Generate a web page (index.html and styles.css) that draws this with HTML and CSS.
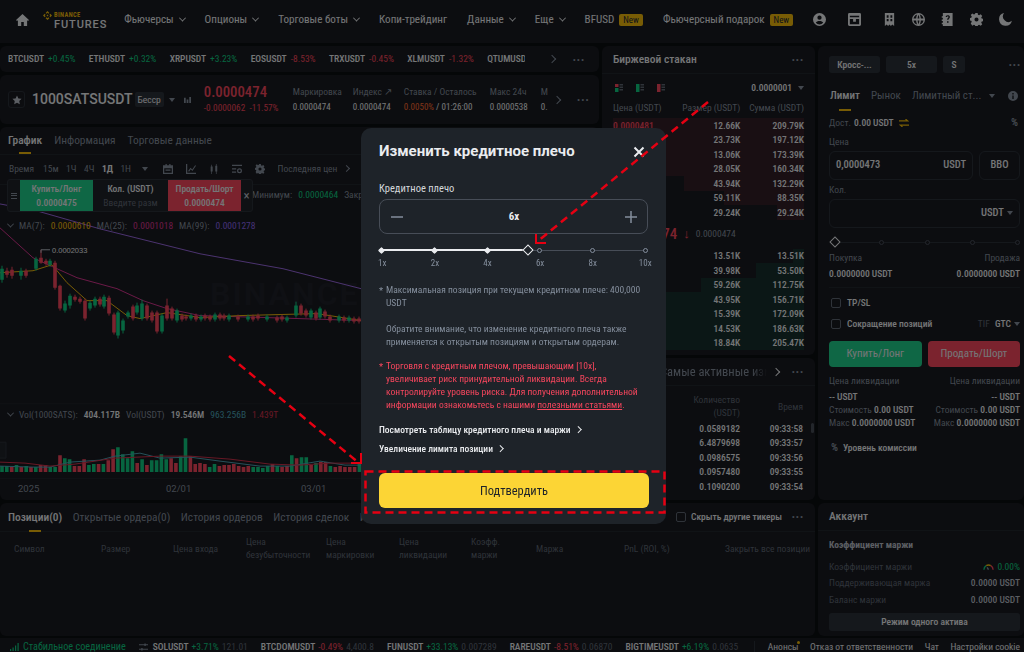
FILE: index.html
```html
<!DOCTYPE html>
<html lang="ru">
<head>
<meta charset="utf-8">
<title>Binance Futures</title>
<link rel="stylesheet" href="styles.css">
</head>
<body>
<div class="app">
  <header class="topbar">
    <svg class="home" viewBox="0 0 14 13"><path d="M7 0 0 6.500 1 7.600l1-.9V13h3.600V8.600h2.800V13H12V6.700l1 .9 1-1.100z"/></svg>
    <div class="logo">
      <svg class="logo-mark" viewBox="0 0 12 12"><path d="M6 0 8.500 2.500 7.300 3.700 6 2.400 4.700 3.700 3.500 2.500zM2.300 3.700 3.500 4.900 2.400 6 3.500 7.100 2.300 8.300 0 6zM9.700 3.700 12 6 9.700 8.300 8.500 7.100 9.600 6 8.500 4.900zM6 4.700 7.300 6 6 7.300 4.700 6zM3.500 9.500 4.700 8.300 6 9.600 7.300 8.300 8.500 9.500 6 12z"/></svg>
      <div class="logo-text"><span class="logo-top">BINANCE</span><span class="logo-bottom">FUTURES</span></div>
    </div>
    <nav class="nav">
      <a class="nav-item">Фьючерсы<i class="chev"></i></a>
      <a class="nav-item">Опционы<i class="chev"></i></a>
      <a class="nav-item">Торговые боты<i class="chev"></i></a>
      <a class="nav-item">Копи-трейдинг</a>
      <a class="nav-item">Данные<i class="chev"></i></a>
      <a class="nav-item">Еще<i class="chev"></i></a>
      <a class="nav-item">BFUSD<b class="new">New</b></a>
      <a class="nav-item">Фьючерсный подарок<b class="new">New</b></a>
    </nav>
    <div class="top-icons">
      <svg viewBox="0 0 14 14"><path fill-rule="evenodd" d="M7 0a7 7 0 1 0 0 14A7 7 0 0 0 7 0zm0 2.800a2.300 2.300 0 1 1 0 4.600 2.300 2.300 0 0 1 0-4.600zM3 10.600c.6-1.400 2.200-2.100 4-2.100s3.400.7 4 2.100a5.400 5.400 0 0 1-8 0z"/></svg>
      <svg viewBox="0 0 14 14"><path fill-rule="evenodd" d="M1.500 0h11A1.500 1.500 0 0 1 14 1.500v11a1.500 1.500 0 0 1-1.500 1.500h-11A1.500 1.500 0 0 1 0 12.500v-11A1.500 1.500 0 0 1 1.500 0zM2 3v1.500h10V3zm0 3.500V12h10V6.500H8.500v3h-3v-3z"/></svg>
      <svg viewBox="0 0 14 14"><path fill-rule="evenodd" d="M2 0h10v14l-2-1.500L8.500 14 7 12.500 5.500 14 4 12.500 2 14zm2 2.500V5h2V2.500zm4 0V5h2V2.500zM4 6.500V9h2V6.500zm4 0V9h2V6.500z"/></svg>
      <svg viewBox="0 0 14 14"><path fill-rule="evenodd" d="M7 0a7 7 0 1 0 0 14A7 7 0 0 0 7 0zM5.700 1.500C5 2.700 4.600 4.100 4.500 6H1.600a5.500 5.500 0 0 1 4.100-4.500zm2.600 0A5.500 5.500 0 0 1 12.400 6H9.500c-.1-1.900-.5-3.300-1.200-4.500zM7 1.800C7.500 3 7.900 4.300 8 6H6c.1-1.700.5-3 1-4.200zM1.600 8h2.900c.1 1.900.5 3.300 1.200 4.500A5.500 5.500 0 0 1 1.600 8zM6 8h2c-.1 1.700-.5 3-1 4.200C6.500 11 6.100 9.700 6 8zm3.500 0h2.900a5.500 5.500 0 0 1-4.100 4.500c.7-1.200 1.100-2.600 1.200-4.500z"/></svg>
      <svg viewBox="0 0 14 14"><path fill-rule="evenodd" d="M2 0h10.500v14H2v-2H.8v-1.500H2v-2H.8V7H2V5H.8V3.500H2zm5.300 2.300C5.900 2.300 5 3.100 5 4.400h1.500c0-.5.300-.8.800-.8s.8.300.8.700c0 .9-1.500 1-1.500 2.900h1.500c0-1.300 1.500-1.500 1.500-3 0-1.200-1-1.900-2.300-1.900zM6.500 9v1.600h1.600V9z"/></svg>
      <svg viewBox="0 0 14 14"><path fill-rule="evenodd" d="M5.800 0h2.400l.4 2 1.200.5 1.700-1.100 1.700 1.700-1.100 1.700.5 1.200 2 .4v2.400l-2 .4-.5 1.200 1.100 1.700-1.700 1.700-1.700-1.100-1.200.5-.4 2H5.800l-.4-2-1.200-.5-1.700 1.100L.8 11.200l1.100-1.700-.5-1.200-2-.4V5.500l2-.4.5-1.200L.8 2.200 2.500.5l1.700 1.100 1.200-.5zM7 4.800a2.200 2.200 0 1 0 0 4.400 2.200 2.200 0 0 0 0-4.400z"/></svg>
      <svg viewBox="0 0 14 14"><path d="M5.500 0a6 6 0 0 0 8.400 8.400A7 7 0 1 1 5.500 0z"/></svg>
    </div>
  </header>

  <main class="board">
    <section class="panel ticker">
      <div class="ticker-list">
        <span class="tick"><b>BTCUSDT</b><em class="up">+0.45%</em></span>
        <span class="tick"><b>ETHUSDT</b><em class="up">+0.32%</em></span>
        <span class="tick"><b>XRPUSDT</b><em class="up">+3.23%</em></span>
        <span class="tick"><b>EOSUSDT</b><em class="down">-8.53%</em></span>
        <span class="tick"><b>TRXUSDT</b><em class="down">-0.45%</em></span>
        <span class="tick"><b>XLMUSDT</b><em class="down">-1.32%</em></span>
        <span class="tick"><b>QTUMUSDT</b><em class="up">-1.23%</em></span>
      </div>
      <i class="chev-right"></i>
      <span class="dots">···</span>
    </section>

    <section class="panel symbol">
      <span class="star-box"><svg viewBox="0 0 12 12"><path d="m6 .6 1.700 3.500 3.800.5-2.800 2.700.7 3.800L6 9.300l-3.400 1.800.7-3.800L.5 4.600l3.800-.5z"/></svg></span>
      <strong class="sym-name">1000SATSUSDT</strong>
      <span class="sym-tag">Бесср</span>
      <i class="caret"></i>
      <svg class="sym-bars" viewBox="0 0 8 8"><path d="M0 2h2v6H0zM3 4h2v4H3zM6 1h2v7H6z"/></svg>
      <div class="sym-price">
        <span class="price-big">0.0000474</span>
        <span class="price-sub">-0.0000062 &nbsp;-11.57%</span>
      </div>
      <div class="sym-stat s1"><span>Маркировка</span><b>0.0000474</b></div>
      <div class="sym-stat s2"><span>Индекс ↗</span><b>0.0000474</b></div>
      <div class="sym-stat s3"><span>Ставка / Осталось</span><b><em class="orange">0.0050%</em> / 01:26:00</b></div>
      <div class="sym-stat s4"><span>Макс 24ч</span><b>0.0000538</b></div>
      <div class="sym-stat s5"><span>М</span><b>0.</b></div>
      <i class="chev-right"></i>
      <span class="dots">···</span>
    </section>

    <section class="panel chart">
      <div class="tabs chart-tabs">
        <span class="tab active">График</span>
        <span class="tab">Информация</span>
        <span class="tab">Торговые данные</span>
      </div>
      <div class="toolbar">
        <span class="tool t-time">Время</span>
        <span class="tool">15м</span>
        <span class="tool">1Ч</span>
        <span class="tool">4Ч</span>
        <span class="tool on">1Д</span>
        <span class="tool">1Н</span>
        <i class="caret tool-caret"></i>
        <svg class="tool-ic" viewBox="0 0 12 12"><path fill-rule="evenodd" d="M3 0h1.500v1.500h3V0H9v1.500h3V12H0V1.500h3zM1.500 5v5.500h9V5z"/><path d="M3 6.500h6V8H3z"/></svg>
        <svg class="tool-ic" viewBox="0 0 12 12"><path d="M0 0h1.500v10.500H12V12H0z"/><path d="m2.500 8.500 3-4 2 2 3.500-5 1 .7-4.300 6.200-2-2-2 2.900z"/></svg>
        <svg class="tool-ic" viewBox="0 0 12 12"><path d="M2 3h2.400v6H2zM2.800 1h.8v11h-.8zM7.500 2h2.400v7H7.500zM8.300 0h.8v12h-.8z"/></svg>
        <svg class="tool-ic" viewBox="0 0 12 12"><path fill-rule="evenodd" d="M0 1h12v1.500H0zM0 5h5v1.500H0zM0 9h5v1.500H0zM9 5a3 3 0 1 1 0 6 3 3 0 0 1 0-6zm0 1.500a1.500 1.500 0 1 0 0 3 1.500 1.500 0 0 0 0-3z"/></svg>
        <svg class="tool-ic" viewBox="0 0 14 14"><path fill-rule="evenodd" d="M5.800 0h2.400l.4 2 1.200.5 1.700-1.100 1.700 1.700-1.100 1.700.5 1.200 2 .4v2.400l-2 .4-.5 1.200 1.100 1.700-1.700 1.700-1.700-1.100-1.200.5-.4 2H5.800l-.4-2-1.200-.5-1.700 1.100L.8 11.200l1.100-1.700-.5-1.200-2-.4V5.500l2-.4.5-1.200L.8 2.200 2.500.5l1.700 1.100 1.200-.5zM7 4.800a2.200 2.200 0 1 0 0 4.400 2.200 2.200 0 0 0 0-4.400z"/></svg>
        <span class="tool t-last">Последняя цен</span>
        <i class="chev-right tool-arrow"></i>
      </div>
      <div class="canvas">
        <svg class="plot" viewBox="0 184 599 316" preserveAspectRatio="none">
          <path class="grid-line" d="M0 403.500H599M0 478.500H599"/>
          <text class="wm" x="210" y="304">BINANCE</text>
          <path class="wm-mark" transform="translate(177 292) scale(1.300) translate(-183 291)" d="M183 277l7 7-3 3-4-4-4 4-3-3zM172 288l3 3-3 3-3-3zM194 288l3 3-3 3-3-3zM183 288l3 3-3 3-3-3zM175 297l3-3 5 5 5-5 3 3-8 8z"/>
          <path class="ma99" d="M0 203 37 210 100 228 200 253 283 268 361 288 420 296"/>
          <path class="ma25" d="M0 227 33 257 57 268 77 277 117 288 143 300 167 308 200 315 267 317 361 320"/>
          <path class="ma7" d="M0 272 33 270 52 264 67 282 87 300 107 300 127 315 140 318 167 312 200 317 240 315 317 313 361 320"/>
          <path class="wick-g" d="M2 265V282M21 267V279M36 256V270M50 258V266M65 300V312M70 293V308M90 300V310M95 296V307M104 294V308M118 310V338M123 318V333M128 310V318M137 302V314M142 299V320M162 313V333M177 308V322M191 313V320M201 314V321M215 312V321M229 313V321M248 314V321M267 314V321M287 315V322M296 301V317M311 308V319M320 306V319M339 314V322M349 315V322"/>
          <path class="wick-r" d="M7 267V277M12 266V278M26 268V277M41 249V263M46 258V265M55 260V289M60 284V310M75 294V301M80 296V303M85 298V320M100 296V306M109 295V315M114 312V334M133 304V320M147 303V320M152 310V322M157 310V333M167 298V320M172 306V320M182 313V321M186 314V320M196 313V321M205 313V320M210 314V321M220 312V320M224 313V320M238 314V321M253 314V321M258 313V320M277 315V322M282 314V321M301 303V315M306 308V317M316 310V320M325 309V318M330 314V322M344 315V322M354 316V323M359 316V323"/>
          <path class="body-g" d="M2 268V279M21 270V275M36 258V268M50 260V264M65 303V310M70 295V305M90 302V308M95 298V305M104 296V306M118 312V335M123 320V330M128 312V316M137 305V312M142 303V318M162 315V331M177 310V320M191 315V318M201 316V319M215 314V319M229 315V319M248 316V319M267 316V319M287 317V320M296 305V315M311 310V317M320 308V317M339 316V320M349 317V320"/>
          <path class="body-r" d="M7 270V274M12 269V275M26 270V275M41 257V262M46 260V263M55 262V287M60 285V308M75 296V299M80 298V301M85 300V318M100 298V304M109 297V313M114 314V332M133 306V318M147 305V318M152 312V320M157 312V331M167 305V318M172 308V318M182 315V319M186 316V318M196 315V319M205 315V318M210 316V319M220 314V318M224 315V318M238 316V319M253 316V319M258 315V318M277 317V320M282 316V319M301 305V313M306 310V315M316 312V318M325 311V316M330 316V320M344 317V320M354 318V321M359 318V321"/>
          <path class="body-g" d="M2 472v-6M6.800 472v-6M16.500 472v-7M26.200 472v-6M35.800 472v-5M50.300 472v-5M55.100 472v-5M64.800 472v-14M69.600 472v-13M88.900 472v-7M93.800 472v-8M103.400 472v-8M117.900 472v-25M122.800 472v-18M127.600 472v-14M132.400 472v-21M142.100 472v-13M151.700 472v-12M156.600 472v-12M161.400 472v-18M166.200 472v-13M180.700 472v-16M185.500 472v-34M209.700 472v-5M214.500 472v-8M253.200 472v-5M258 472v-5M262.800 472v-4M267.700 472v-6M277.300 472v-6M291.800 472v-17M301.500 472v-15M306.300 472v-15M316 472v-9M330.400 472v-6M359.400 472v-8"/>
          <path class="body-r" d="M11.700 472v-5M21.300 472v-5M31 472v-5M40.600 472v-7M45.500 472v-7M60 472v-17M74.500 472v-6M79.300 472v-6M84.100 472v-13M98.600 472v-8M108.300 472v-12M113.100 472v-23M137.200 472v-9M146.900 472v-7M171.100 472v-14M175.900 472v-9M190.400 472v-16M195.200 472v-8M200 472v-9M204.900 472v-8M219.400 472v-6M224.200 472v-7M229 472v-7M233.800 472v-8M238.700 472v-6M243.500 472v-5M248.300 472v-6M272.500 472v-8M282.100 472v-5M287 472v-6M296.600 472v-14M311.100 472v-7M320.800 472v-10M325.600 472v-10M335.300 472v-5M340.100 472v-6M344.900 472v-5M349.800 472v-5M354.600 472v-5"/>
          <path class="vol-ma1" d="M0 466 33 467 50 467 70 462 100 460 115 456 140 453 160 458 190 457 220 461 260 466 290 466 320 461 345 465 361 465"/>
          <path class="vol-ma2" d="M0 462 25 463 50 466 75 464 115 458 160 456 190 456 230 459 270 464 300 465 330 463 361 463"/>
          <path class="wm-tab" d="M0 442H6V458H0"/>
          <path class="price-tick" d="M41 249V252M41 249H50"/>
          <text class="price-label" x="52" y="252">0.0002033</text>
          <g class="axis">
            <text x="18" y="492">2025</text>
            <text x="166" y="492">02/01</text>
            <text x="301" y="492">03/01</text>
          </g>
        </svg>
        <div class="ohlc"><span>Минимум:</span><em class="up">0.0000464</em><span>Закрыть:</span></div>
        <div class="trade-widget">
          <span class="tw-grip"><i></i><i></i><i></i></span>
          <button class="tw-btn buy"><b>Купить/Лонг</b><b>0.0000475</b></button>
          <span class="tw-mid"><b>Кол. (USDT)</b><span>Введите разм</span></span>
          <button class="tw-btn sell"><b>Продать/Шорт</b><b>0.0000474</b></button>
          <span class="tw-close">×</span>
        </div>
        <div class="legend ma-legend">
          <i class="chev small"></i><span>MA(7):</span><em class="c-yellow">0.0000610</em><span>MA(25):</span><em class="c-pink">0.0001018</em><span>MA(99):</span><em class="c-violet">0.0001278</em>
        </div>
        <div class="legend vol-legend">
          <i class="chev small"></i><span>Vol(1000SATS):</span><b>404.117B</b><span>Vol(USDT)</span><b>19.546M</b><em class="c-teal">963.256B</em><em class="c-maroon">1.439T</em>
        </div>
      </div>
    </section>

    <section class="panel book">
      <div class="panel-head"><span class="panel-title">Биржевой стакан</span><span class="dots">···</span></div>
      <div class="book-tools">
        <svg viewBox="0 0 8 8"><path class="f-r" d="M0 0h3.500v3H0z"/><path class="f-g" d="M0 4h3.500v4H0z"/><path class="f-gray" d="M4.500 0H8v1.500H4.500zM4.500 2.500H8V4H4.500zM4.500 5H8v1.500H4.500z"/></svg>
        <svg viewBox="0 0 8 8"><path class="f-g" d="M0 0h3.500v8H0z"/><path class="f-gray" d="M4.500 0H8v1.500H4.500zM4.500 2.500H8V4H4.500zM4.500 5H8v1.500H4.500z"/></svg>
        <svg viewBox="0 0 8 8"><path class="f-r" d="M0 0h3.500v8H0z"/><path class="f-gray" d="M4.500 0H8v1.500H4.500zM4.500 2.500H8V4H4.500zM4.500 5H8v1.500H4.500z"/></svg>
        <span class="tick-size">0.0000001</span><i class="caret"></i>
      </div>
      <div class="book-head"><span>Цена (USDT)</span><span>Размер (USDT)</span><span>Сумма (USDT)</span></div>
      <div class="book-rows">
        <div class="ob ask"><i style="width:100%"></i><span>0.0000481</span><span>12.66K</span><span>209.79K</span></div>
        <div class="ob ask"><i style="width:94%"></i><span>0.0000480</span><span>23.73K</span><span>197.12K</span></div>
        <div class="ob ask"><i style="width:83%"></i><span>0.0000479</span><span>13.06K</span><span>173.39K</span></div>
        <div class="ob ask"><i style="width:76%"></i><span>0.0000478</span><span>28.05K</span><span>160.34K</span></div>
        <div class="ob ask"><i style="width:63%"></i><span>0.0000477</span><span>43.94K</span><span>132.29K</span></div>
        <div class="ob ask"><i style="width:42%"></i><span>0.0000476</span><span>59.11K</span><span>88.35K</span></div>
        <div class="ob ask"><i style="width:14%"></i><span>0.0000475</span><span>29.24K</span><span>29.24K</span></div>
      </div>
      <div class="book-mid"><span class="mid-price">0.0000474</span><span class="mid-arrow">↓</span><span class="mid-mark">0.0000474</span></div>
      <div class="book-rows">
        <div class="ob bid"><i style="width:6%"></i><span>0.0000474</span><span>13.51K</span><span>13.51K</span></div>
        <div class="ob bid"><i style="width:25%"></i><span>0.0000473</span><span>39.98K</span><span>53.50K</span></div>
        <div class="ob bid"><i style="width:54%"></i><span>0.0000472</span><span>59.26K</span><span>112.75K</span></div>
        <div class="ob bid"><i style="width:75%"></i><span>0.0000471</span><span>43.95K</span><span>156.71K</span></div>
        <div class="ob bid"><i style="width:82%"></i><span>0.0000470</span><span>15.39K</span><span>172.09K</span></div>
        <div class="ob bid"><i style="width:89%"></i><span>0.0000469</span><span>14.53K</span><span>186.63K</span></div>
        <div class="ob bid"><i style="width:98%"></i><span>0.0000468</span><span>18.84K</span><span>205.47K</span></div>
      </div>
    </section>

    <section class="panel trades">
      <div class="panel-head trades-head"><span class="panel-title fade">Сделки &nbsp; Самые активные изменения</span><i class="chev-right"></i><span class="dots">···</span></div>
      <div class="trades-cols"><span>Цена (USDT)</span><span>Количество<br>(USDT)</span><span>Время</span></div>
      <div class="tr"><span class="down">0.0000474</span><span>0.0589182</span><span>09:33:58</span></div>
      <div class="tr"><span class="up">0.0000475</span><span>6.4879698</span><span>09:33:57</span></div>
      <div class="tr"><span class="up">0.0000475</span><span>0.0986575</span><span>09:33:56</span></div>
      <div class="tr"><span class="down">0.0000474</span><span>0.0957480</span><span>09:33:55</span></div>
      <div class="tr"><span class="down">0.0000474</span><span>0.1090200</span><span>09:33:54</span></div>
      <i class="scrollthumb"></i>
    </section>

    <aside class="panel order">
      <div class="pills">
        <span class="pill">Кросс-...</span><span class="pill">5x</span><span class="pill narrow">S</span><span class="dots">···</span>
      </div>
      <div class="order-tabs">
        <span class="tab active">Лимит</span><span class="tab">Рынок</span><span class="tab">Лимитный ст...</span><i class="caret"></i>
        <svg class="info" viewBox="0 0 10 10"><path fill-rule="evenodd" d="M5 0a5 5 0 1 0 0 10A5 5 0 0 0 5 0zM4.300 2h1.400v1.400H4.300zm0 2.400h1.400V8H4.300z"/></svg>
      </div>
      <div class="avail"><span class="muted">Дост.</span><b>0.00 USDT</b>
        <svg class="swap" viewBox="0 0 10 8"><path d="M0 1.800h8.500L6.500 0M10 6.200H1.500L3.500 8" fill="none" stroke="currentColor" stroke-width="1.200"/></svg>
        <span class="pct">%</span></div>
      <label class="f-label">Цена</label>
      <div class="field-row">
        <div class="field"><b>0,0000473</b><b>USDT</b></div>
        <div class="field bbo">BBO</div>
      </div>
      <label class="f-label second">Кол.</label>
      <div class="field full"><span></span><b>USDT <i class="caret"></i></b></div>
      <div class="o-slider">
        <i class="o-line"></i>
        <i class="o-diamond"></i><i class="o-dot"></i><i class="o-dot"></i><i class="o-dot"></i><i class="o-dot"></i>
      </div>
      <div class="two muted"><span>Покупка</span><span>Продажа</span></div>
      <div class="two strong"><span>0.0000000 USDT</span><span>0.0000000 USDT</span></div>
      <hr class="rule">
      <div class="check-row"><i class="box"></i><span>TP/SL</span></div>
      <div class="check-row"><i class="box"></i><span>Сокращение позиций</span><span class="tif"><em>TIF</em> GTC <i class="caret"></i></span></div>
      <div class="actions"><button class="act buy">Купить/Лонг</button><button class="act sell">Продать/Шорт</button></div>
      <div class="two muted liq"><span>Цена ликвидации</span><span>Цена ликвидации</span></div>
      <div class="two strong"><span>-- USDT</span><span>-- USDT</span></div>
      <div class="two strong"><span><em>Стоимость</em> 0.00 USDT</span><span><em>Стоимость</em> 0.00 USDT</span></div>
      <div class="two strong"><span><em>Макс</em> 0.0000000 USDT</span><span><em>Макс</em> 0.0000000 USDT</span></div>
      <div class="fee"><span class="pct">%</span><span>Уровень комиссии</span></div>
    </aside>

    <section class="panel positions">
      <div class="tabs pos-tabs">
        <span class="tab active">Позиции(0)</span>
        <span class="tab">Открытые ордера(0)</span>
        <span class="tab">История ордеров</span>
        <span class="tab">История сделок</span>
        <span class="tab">История транзакций</span>
        <span class="pos-right"><i class="box"></i><span>Скрыть другие тикеры</span><span class="dots">···</span></span>
      </div>
      <div class="pos-cols">
        <span>Символ</span><span>Размер</span><span>Цена входа</span><span>Цена<br>безубыточности</span><span>Цена<br>маркировки</span><span>Цена<br>ликвидации</span><span>Коэфф.<br>маржи</span><span>Маржа</span><span>PnL (ROI, %)</span><span>Закрыть все позиции</span>
      </div>
    </section>

    <aside class="panel account">
      <div class="panel-head"><span class="panel-title">Аккаунт</span></div>
      <div class="acc-body">
        <div class="acc-sub">Коэффициент маржи</div>
        <div class="acc-row"><span>Коэффициент маржи</span><span class="gauge-wrap"><svg class="gauge" viewBox="0 0 12 9"><path d="M1 8A5 5 0 0 1 3.500 3.600" stroke="#0ecb81"/><path d="M3.500 3.600A5 5 0 0 1 8.500 3.600" stroke="#f0b90b"/><path d="M8.500 3.600A5 5 0 0 1 11 8" stroke="#f6465d"/><path d="M6 8 4.500 5.500" stroke="#848e9c"/></svg><em class="up">0.00%</em></span></div>
        <div class="acc-row"><span>Поддерживающая маржа</span><b>0.0000 USDT</b></div>
        <div class="acc-row"><span>Баланс маржи</span><b>0.0000 USDT</b></div>
        <div class="acc-btn">Режим одного актива</div>
      </div>
    </aside>
  </main>

  <footer class="status">
    <svg class="signal" viewBox="0 0 9 8"><path d="M0 6h1.200v2H0zM2.500 4.500h1.200V8H2.500zM5 2.500h1.200V8H5zM7.500 0h1.200v8H7.500z"/></svg>
    <span class="up conn">Стабильное соединение</span>
    <svg class="sliders" viewBox="0 0 10 8"><path d="M0 1h10v1H0zM0 6h10v1H0zM6 0h1.500v3H6zM2.500 5H4v3H2.500z"/></svg>
    <div class="stat-list">
      <span class="tick"><b>SOLUSDT</b><em class="up">+3.71%</em><u>121.01</u></span>
      <span class="tick"><b>BTCDOMUSDT</b><em class="down">-0.49%</em><u>4,400.8</u></span>
      <span class="tick"><b>FUNUSDT</b><em class="up">+33.13%</em><u>0.007289</u></span>
      <span class="tick"><b>RAREUSDT</b><em class="down">-8.51%</em><u>0.06870</u></span>
      <span class="tick"><b>BIGTIMEUSDT</b><em class="up">+6.19%</em><u>0.0635</u></span>
    </div>
    <div class="foot-links">
      <a class="notice">Анонсы</a><a>Отказ от ответственности</a><a>Чат</a><a>Настройки cookie</a>
    </div>
  </footer>
</div>

<div class="backdrop">
  <div class="modal">
    <div class="modal-head"><h2>Изменить кредитное плечо</h2>
      <svg class="close" viewBox="0 0 12 12"><path d="M1.500 1.500l9 9M10.500 1.500l-9 9"/></svg>
    </div>
    <div class="m-label">Кредитное плечо</div>
    <div class="stepper">
      <svg viewBox="0 0 12 12"><path d="M0 6h12"/></svg>
      <b>6x</b>
      <svg viewBox="0 0 12 12"><path d="M0 6h12M6 0v12"/></svg>
    </div>
    <div class="slider">
      <i class="s-track"></i><i class="s-fill"></i>
      <i class="s-mark on"></i><i class="s-mark on"></i><i class="s-mark on"></i><i class="s-mark"></i><i class="s-mark"></i><i class="s-mark"></i>
      <i class="s-thumb"></i>
    </div>
    <div class="s-labels"><span>1x</span><span>2x</span><span>4x</span><span>6x</span><span>8x</span><span>10x</span></div>
    <p class="note star">Максимальная позиция при текущем кредитном плече: 400,000 USDT</p>
    <p class="note">Обратите внимание, что изменение кредитного плеча также применяется к открытым позициям и открытым ордерам.</p>
    <p class="note star warn">Торговля с кредитным плечом, превышающим [10x], увеличивает риск принудительной ликвидации. Всегда контролируйте уровень риска. Для получения дополнительной информации ознакомьтесь с нашими <u>полезными статьями</u>.</p>
    <a class="m-link">Посмотреть таблицу кредитного плеча и маржи<i class="chev-right"></i></a>
    <a class="m-link">Увеличение лимита позиции<i class="chev-right"></i></a>
    <button class="confirm">Подтвердить</button>
  </div>
</div>

<svg class="marks" viewBox="0 0 1024 652">
  <path class="dash" d="M229 356 359 463"/>
  <path class="arrow" d="M351 463H361V453"/>
  <path class="dash" d="M708 102 538 241"/>
  <path class="arrow" d="M536 234 536 243 546 243"/>
  <rect class="dash" x="365.500" y="471.500" width="299" height="41"/>
</svg>
</body>
</html>
```
FILE: styles.css
```css
*{box-sizing:border-box}
html,body{margin:0;height:100%;overflow:hidden}
body{background:#0b0e11;color:#eaecef;font:11px/1.2 Roboto,"Noto Sans",sans-serif;font-stretch:85%}
em{font-style:normal}
i{display:inline-block}
a{color:inherit}
button{font:inherit;font-stretch:inherit;border:0;padding:0;color:inherit}
p,h2{margin:0}

.app{width:1024px;height:652px;display:flex;flex-direction:column}
.up{color:#0ecb81}
.down{color:#f6465d}
.orange{color:#fc6a31}
.c-yellow{color:#f0b90b}
.c-pink{color:#d6348f}
.c-violet{color:#8a63e6}
.c-teal{color:#4ba3b5}
.c-maroon{color:#d0304a}

.chev{width:5px;height:5px;border:solid currentColor;border-width:0 1.2px 1.2px 0;transform:rotate(45deg) translate(-1px,-1px);margin-left:6px;flex:none}
.chev.small{margin:0 0 0 4px;color:#848e9c}
.chev-right{width:6px;height:6px;border:solid currentColor;border-width:1.400px 1.400px 0 0;transform:rotate(45deg);flex:none}
.caret{width:0;height:0;border:3.500px solid transparent;border-top:4px solid #848e9c;border-bottom:0;flex:none}
.dots{color:#848e9c;font-size:13px;font-weight:700;letter-spacing:.5px;line-height:1;flex:none}

.topbar{height:43px;flex:none;background:#181a20;display:flex;align-items:center;padding:0 0 4px 16px}
.home{width:13px;height:12px;fill:#eaecef;flex:none}
.logo{display:flex;margin-left:14px;gap:2px;flex:none}
.logo-mark{width:9px;height:9px;fill:#f0b90b;margin-top:1px}
.logo-text{display:flex;flex-direction:column;line-height:1}
.logo-top{font-size:6.500px;font-weight:700;color:#f0b90b;letter-spacing:.35px;margin-top:2px}
.logo-bottom{font-size:11px;font-weight:500;color:#eaecef;letter-spacing:.9px;font-stretch:100%;margin-top:.5px}
.nav{display:flex;align-items:center;gap:20px;margin-left:17px;flex:none}
.nav-item{display:flex;align-items:center;font-size:11.100px;color:#eaecef;white-space:nowrap}
.new{display:inline-block;margin-left:5px;padding:1px 4px;background:#f0b90b;color:#202630;font-weight:400;font-size:9px;line-height:10px;border-radius:2px}
.top-icons{margin-left:auto;display:flex;gap:16px;padding-right:12px;align-items:center}
.top-icons svg{width:13px;height:13px;fill:#eaecef}
.top-icons svg:nth-child(-n+2){margin-right:6px}

.board{flex:1;display:grid;gap:3px;padding-top:3px;
  grid-template-columns:599px 213px 206px;
  grid-template-rows:26px 49px 228px 142px 133px;
  grid-template-areas:"tk bk od" "sy bk od" "ch bk od" "ch tr od" "ps ps ac";
  column-gap:3px}
.panel{background:#181a20;border-radius:6px;position:relative;overflow:hidden}

.ticker{grid-area:tk;display:flex;align-items:center;padding:0 14px 0 8px;color:#eaecef}
.ticker-list{flex:1;display:flex;gap:13.300px;overflow:hidden;white-space:nowrap;max-width:530px;margin-right:24px}
.tick{display:inline-flex;gap:4px;font-size:9.500px;flex:none}
.tick b{font-weight:500;color:#eaecef}
.ticker .chev-right{color:#848e9c;margin-right:17px}

.symbol{grid-area:sy;display:flex;align-items:center;padding:0 14px 0 8px;gap:0}
.star-box{width:17px;height:17px;border:1px solid #2b3139;border-radius:3px;display:flex;align-items:center;justify-content:center;flex:none}
.star-box svg{width:10px;height:10px;fill:#b7bdc6}
.sym-name{font-size:14px;font-weight:500;margin-left:7px;font-stretch:100%}
.sym-tag{background:#2b3139;border-radius:2px;font-size:9.500px;padding:2px 3px;margin-left:2px;color:#eaecef}
.symbol>.caret{margin-left:5px}
.sym-bars{width:7px;height:7px;fill:#848e9c;margin-left:9px;flex:none}
.sym-price{display:flex;flex-direction:column;margin-left:13px;gap:2px;flex:none;width:89px;white-space:nowrap}
.price-big{font-size:14.800px;font-weight:500;color:#f6465d;line-height:15px}
.price-sub{font-size:9.300px;color:#f6465d}
.sym-stat{display:flex;flex-direction:column;gap:4px;font-size:9.500px;color:#848e9c;white-space:nowrap;flex:none}
.sym-stat b{font-weight:400;color:#eaecef;font-size:9px}
.s1{width:60px}.s2{width:51px}.s3{width:86px}.s4{width:51px}.s5{width:13px}
.symbol>.chev-right{color:#848e9c;margin-right:17px}

.chart{grid-area:ch;display:flex;flex-direction:column}
.tabs{display:flex;align-items:center;flex:none;border-bottom:1px solid #21262d}
.tab{position:relative;color:#848e9c;white-space:nowrap;font-size:11.400px}
.tab.active{color:#eaecef;font-weight:500}
.tab.active::after{content:"";position:absolute;left:50%;bottom:-6px;width:12px;height:2px;margin-left:-6px;background:#f0b90b}
.chart-tabs{height:28px;padding-left:8px;gap:12px}
.chart-tabs .tab.active::after{bottom:-7px}
.toolbar{height:30px;flex:none;display:flex;align-items:center;border-bottom:1px solid #21262d;padding:0 0 2px 9px;font-size:9.500px;color:#848e9c}
.tool{white-space:nowrap;margin-right:7.500px}
.tool.t-time{margin-right:9px}
.tool.on{color:#eaecef;font-weight:700}
.tool-caret{margin:0 15px 0 3px}
.tool-ic{width:10px;height:10px;fill:#848e9c;margin-right:13px;flex:none}
.tool.t-last{margin:0 6px 0 0;width:60px;overflow:hidden}
.tool-arrow{width:5px;height:5px;margin-left:0}
.canvas{position:relative;flex:1}
.plot{display:block;width:599px;height:100%;position:absolute;left:0;top:0}
.grid-line{stroke:#21242b;stroke-width:1;fill:none}
.wm{font:700 32px Roboto,sans-serif;letter-spacing:2px;fill:#1e2028}
.wm-mark{fill:#1e2028}
.ma99,.ma25,.ma7,.vol-ma1,.vol-ma2{fill:none;stroke-width:1}
.ma99{stroke:#9966e0}
.ma25{stroke:#d6348f}
.ma7{stroke:#f0b90b}
.vol-ma1{stroke:#4ba3b5}
.vol-ma2{stroke:#d0304a}
.wick-g{stroke:#0ecb81;stroke-width:1;fill:none}
.wick-r{stroke:#f6465d;stroke-width:1;fill:none}
.body-g{stroke:#0ecb81;stroke-width:3.600;fill:none}
.body-r{stroke:#f6465d;stroke-width:3.600;fill:none}
.wm-tab{stroke:#2b3139;fill:#1e2329}
.price-tick{stroke:#b7bdc6;fill:none}
.price-label{font:7.500px "Liberation Sans",sans-serif;fill:#eaecef}
.axis{font:9.500px Roboto,sans-serif;fill:#848e9c}

.trade-widget{position:absolute;left:7px;top:-6px;width:246px;height:33px;display:flex;background:#1e2329;border:1px solid #2b3139;border-radius:3px}
.tw-grip{width:12px;display:flex;flex-direction:column;justify-content:center;gap:1.500px;align-items:center}
.tw-grip i{width:6px;height:1px;background:#848e9c}
.tw-btn{width:73px;display:flex;flex-direction:column;align-items:center;justify-content:center;gap:3px;font-size:9.500px;color:#eaecef;line-height:11px}
.tw-btn b{font-weight:500}
.tw-btn.buy{background:#1fce8a}
.tw-btn.sell{background:#f6465d}
.tw-mid{width:75px;display:flex;flex-direction:column;align-items:center;justify-content:center;gap:3px;font-size:9.500px;line-height:11px}
.tw-mid b{font-weight:500}
.tw-mid span{color:#5e6673}
.tw-close{flex:1;color:#b7bdc6;text-align:center;font-size:13px;line-height:31px}
.ohlc{position:absolute;left:252px;top:4px;display:flex;gap:6px;font-size:9.500px;color:#848e9c;white-space:nowrap}
.legend{position:absolute;left:4px;display:flex;align-items:center;gap:6px;font-size:9.500px;color:#848e9c;white-space:nowrap}
.legend b{font-weight:500;color:#eaecef}
.ma-legend{top:35px}
.vol-legend{top:224px}

.panel-head{height:28px;display:flex;align-items:center;justify-content:space-between;padding:0 11px;border-bottom:1px solid #21262d;flex:none}
.panel-title{font-size:11.500px;font-weight:500;color:#eaecef;white-space:nowrap}

.book{grid-area:bk;display:flex;flex-direction:column}
.book-tools{display:flex;align-items:center;height:24px;padding:4px 11px 0 13px;gap:13px}
.book-tools svg{width:8px;height:8px;flex:none}
.f-r{fill:#f6465d}.f-g{fill:#0ecb81}.f-gray{fill:#5e6673}
.tick-size{margin-left:auto;font-size:9.500px;font-weight:500}
.book-tools .tick-size{margin-right:-7px}
.book-head{display:grid;grid-template-columns:1fr 1fr 1fr;padding:0 11px;font-size:9.500px;color:#848e9c;height:16px;align-items:center;white-space:nowrap;margin-top:2px}
.book-head span:nth-child(n+2),.ob span:nth-child(n+3){text-align:right}
.book-rows{display:flex;flex-direction:column;margin:0 11px}
.book-head+.book-rows{margin-top:2px}
.ob{position:relative;display:grid;grid-template-columns:1fr 1fr 1fr;height:14.500px;align-items:center;font-size:9.500px;font-weight:500}
.ob i{position:absolute;right:0;top:0;bottom:0}
.ob span{position:relative}
.ob.ask i{background:rgba(246,70,93,.12)}
.ob.bid i{background:rgba(14,203,129,.12)}
.ob.ask span:nth-of-type(1){color:#f6465d}
.ob.bid span:nth-of-type(1){color:#0ecb81}
.book-mid{height:29px;display:flex;align-items:center;padding:0 11px;gap:6px}
.mid-price{font-size:15px;font-weight:500;color:#f6465d}
.mid-arrow{color:#f6465d;font-size:13px;font-weight:700}
.mid-mark{font-size:9.500px;color:#848e9c}

.trades{grid-area:tr}
.trades-head{justify-content:flex-start;gap:0}
.fade{flex:1;overflow:hidden;-webkit-mask-image:linear-gradient(90deg,#000 90%,transparent);mask-image:linear-gradient(90deg,#000 90%,transparent);color:#848e9c;font-weight:400;font-size:12.500px}
.trades-head .chev-right{color:#eaecef;margin:0 12px 0 6px}
.trades-cols{display:grid;grid-template-columns:1fr 60px 63px;font-size:9.500px;line-height:13px;color:#5e6673;padding:5px 12px 0 11px;height:35px;align-items:center;text-align:right}
.trades-cols span:first-child{text-align:left}
.tr{display:grid;grid-template-columns:1fr 60px 63px;height:14.500px;align-items:center;text-align:right;font-size:9.500px;font-weight:500;padding:0 12px 0 11px}
.tr span:first-child{text-align:left}
.scrollthumb{position:absolute;right:1px;top:65px;width:3px;height:10px;background:#474d57;border-radius:2px}

.order{grid-area:od;padding:0 4px 0 11px;display:flex;flex-direction:column}
.pills{display:flex;align-items:center;gap:6px;padding-top:9px;height:28px}
.pill{width:51px;height:17px;background:#2b3139;border-radius:3px;font-size:9.500px;font-weight:500;display:flex;align-items:center;justify-content:center}
.pill.narrow{width:22px}
.pills .dots{margin-left:auto;margin-right:-1px}
.order-tabs{display:flex;align-items:center;margin-top:15px;height:14px;padding-left:1px}
.order-tabs .tab{margin-right:11px;font-size:11px}
.order-tabs .tab.active::after{bottom:-8px}
.order-tabs .caret{margin-left:-3px}
.info{width:10px;height:10px;fill:#848e9c;margin-left:auto;margin-right:2px}
.avail{display:flex;align-items:center;gap:3px;margin-top:13px;font-size:9.500px;height:13px;padding-right:2px}
.avail b{font-weight:500}
.muted{color:#848e9c}
.swap{width:10px;height:8px;color:#f0b90b;margin-left:2px}
.pct{margin-left:auto;color:#848e9c;font-size:11px;font-weight:700}
.f-label{display:block;font-size:9.500px;color:#848e9c;margin-top:7px;height:13px}
.f-label.second{margin-top:4px}
.field-row{display:flex;gap:6px;margin-top:2px}
.field{flex:1;height:29px;border:1px solid #2b3139;border-radius:6px;display:flex;align-items:center;justify-content:space-between;padding:0 6px;font-size:10.500px}
.field b{font-weight:500}
.field.bbo{flex:none;width:41px;justify-content:center;font-weight:500;color:#eaecef}
.field.full{flex:none;margin-top:2px}
.field.full .caret{display:inline-block;vertical-align:middle;margin-left:1px}
.o-slider{position:relative;height:14px;margin-top:7px;display:flex;justify-content:space-between;align-items:center}
.o-line{position:absolute;left:2px;right:2px;top:50%;height:1px;background:#2b3139}
.o-diamond{width:8px;height:8px;background:#181a20;border:1px solid #eaecef;transform:rotate(45deg);position:relative;margin-left:2px}
.o-dot{width:5px;height:5px;background:#181a20;border:1px solid #474d57;border-radius:50%;position:relative}
.two{display:flex;justify-content:space-between;font-size:9.500px;height:13px;align-items:center;white-space:nowrap}
.two.muted{margin-top:1px}
.o-slider+.two{margin-top:2px}
.two.strong{color:#eaecef;font-weight:500}
.two.strong em{color:#848e9c;font-weight:400}
.two.muted+.two.strong{margin-top:3px}
.liq+.two.strong{margin-top:2px}
.two.strong+.two.strong{margin-top:0}
.rule{border:0;border-top:1px solid #21262d;margin:7px 0 0;width:100%}
.box{width:10px;height:10px;border:1px solid #5e6673;border-radius:2px;flex:none}
.check-row{display:flex;align-items:center;gap:6px;margin-left:2px;height:21px;font-size:9.500px;font-weight:500;color:#eaecef}
.rule+.check-row{margin-top:4px}
.tif{margin-left:auto;font-weight:500}
.tif em{color:#5e6673;font-weight:400;margin-right:3px}
.tif .caret{display:inline-block;vertical-align:middle;margin-left:1px}
.actions{display:flex;gap:6px;margin-top:7px}
.act{flex:1;height:26px;border-radius:4px;font-size:11px;color:#eaecef}
.act.buy{background:#1fce8a}
.act.sell{background:#f6465d}
.liq.two{margin-top:7px}
.fee{display:flex;align-items:center;gap:5px;margin-top:12px;font-size:9.500px;font-weight:500;margin-left:2px}
.fee .pct{margin-left:0}

.positions{grid-area:ps}
.pos-tabs{height:29px;padding:0 11px 0 8px;gap:10.500px;padding-top:1px}
.pos-tabs .tab.active::after{bottom:-8px}
.pos-right{position:absolute;right:11px;top:7px;display:flex;align-items:center;gap:5px;font-size:9.500px;font-weight:500;background:#181a20;padding-left:20px;width:148px;white-space:nowrap}
.pos-right .dots{margin-left:auto}
.pos-cols{display:grid;grid-template-columns:87px 72px 73px 80px 73px 72px 65px 88px 101px auto;padding:3px 0 0 14px;font-size:9.500px;line-height:13px;color:#5e6673;align-items:center;white-space:nowrap}

.account{grid-area:ac;display:flex;flex-direction:column}
.acc-body{padding:8px 4px 0 11px}
.acc-sub{font-size:9.500px;font-weight:700;color:#b7bdc6;margin-bottom:8px}
.acc-row{display:flex;justify-content:space-between;align-items:center;height:16.500px;font-size:9.500px;color:#5e6673}
.acc-row b{font-weight:500;color:#b7bdc6}
.gauge-wrap{display:flex;align-items:center;gap:3px}
.gauge{width:11px;height:9px;fill:none;stroke-width:1.500}
.acc-btn{margin-top:5px;height:18px;background:#2b3139;border-radius:3px;display:flex;align-items:center;justify-content:center;font-size:9.500px;font-weight:500}

.status{height:14px;flex:none;margin-top:2px;background:#181a20;display:flex;align-items:center;padding:4px 0 0 10px;font-size:9.500px;line-height:10px;white-space:nowrap}
.signal{width:9px;height:8px;fill:#0ecb81;flex:none}
.conn{margin-left:4px;font-size:10.200px}
.sliders{width:9px;height:8px;fill:#848e9c;margin-left:13px;flex:none}
.stat-list{display:flex;gap:13px;margin-left:5px;flex:none}
.stat-list .tick{gap:3px;font-size:9.500px}
.stat-list u{text-decoration:none;color:#5e6673}
.foot-links{margin-left:auto;display:flex;gap:11.500px;padding:0 4px 0 13px;border-left:1px solid #2b3139;color:#eaecef;height:12px;align-items:center;font-size:9.500px}
.notice{position:relative}
.notice::after{content:"";position:absolute;right:-1px;top:-1px;width:3px;height:3px;border-radius:50%;background:#f0b90b}

.backdrop{position:fixed;inset:0;background:rgba(0,0,0,.5);display:flex;align-items:center;justify-content:center;padding-left:3px}
.modal{width:305px;height:396px;background:#1e2329;border-radius:10px;padding:15px 18px 0}
.modal-head{display:flex;align-items:center;justify-content:space-between;height:17px}
.modal-head h2{font-size:15px;font-stretch:100%;font-weight:700;line-height:17px;white-space:nowrap}
.close{width:12px;height:12px;fill:none;stroke:#eaecef;stroke-width:2;margin-right:3px}
.m-label{font-size:10.500px;color:#d5d8dc;margin-top:22px;height:14px;line-height:13px}
.stepper{height:35px;margin-top:3px;border:1px solid #474d57;border-radius:8px;display:flex;align-items:center;justify-content:space-between;padding:0 10px 0 11px;font-size:11px}
.stepper svg{width:12px;height:12px;stroke:#848e9c;stroke-width:1.500;fill:none}
.stepper b{font-weight:700}
.slider{position:relative;height:10px;margin-top:11px;display:flex;justify-content:space-between;align-items:center}
.s-track{position:absolute;left:3px;right:3px;top:4.500px;height:1px;background:#474d57}
.s-fill{position:absolute;left:3px;width:146px;top:4px;height:1.500px;background:#eaecef}
.s-mark{position:relative;width:5px;height:5px;border:1px solid #848e9c;background:#1e2329;border-radius:50%}
.s-mark.on{background:#eaecef;border-color:#eaecef;transform:rotate(45deg);border-radius:1px}
.s-thumb{position:absolute;left:145px;top:1px;width:8px;height:8px;background:#1e2329;border:1.500px solid #eaecef;transform:rotate(45deg)}
.s-labels{display:flex;font-size:9px;color:#848e9c;margin:2px 0 0 -23px;height:12px;line-height:12px}
.s-labels span{flex:none;width:52.600px;text-align:center}
.note{font-size:9.550px;line-height:13px;color:#848e9c;padding-left:7px;position:relative;margin-top:13px}
.note.star{margin-top:14px}
.note.star::before{content:"*";position:absolute;left:0;top:1px}
.note.warn{color:#f6465d;margin-top:11px}
.note u{text-underline-offset:1px}
.m-link{display:flex;align-items:center;font-size:9.500px;font-weight:500;color:#eaecef;height:13px;margin-top:6px}
.note+.m-link{margin-top:12px}
.m-link .chev-right{width:4.500px;height:4.500px;margin-left:5px}
.confirm{display:block;width:270px;height:35px;background:#fcd535;border-radius:6px;color:#1e2329;font-size:12.500px;margin-top:18px}

.marks{position:fixed;left:0;top:0;width:1024px;height:652px;pointer-events:none}
.dash{fill:none;stroke:#e60012;stroke-width:2.500;stroke-dasharray:8 5}
.arrow{fill:none;stroke:#e60012;stroke-width:2}
```
